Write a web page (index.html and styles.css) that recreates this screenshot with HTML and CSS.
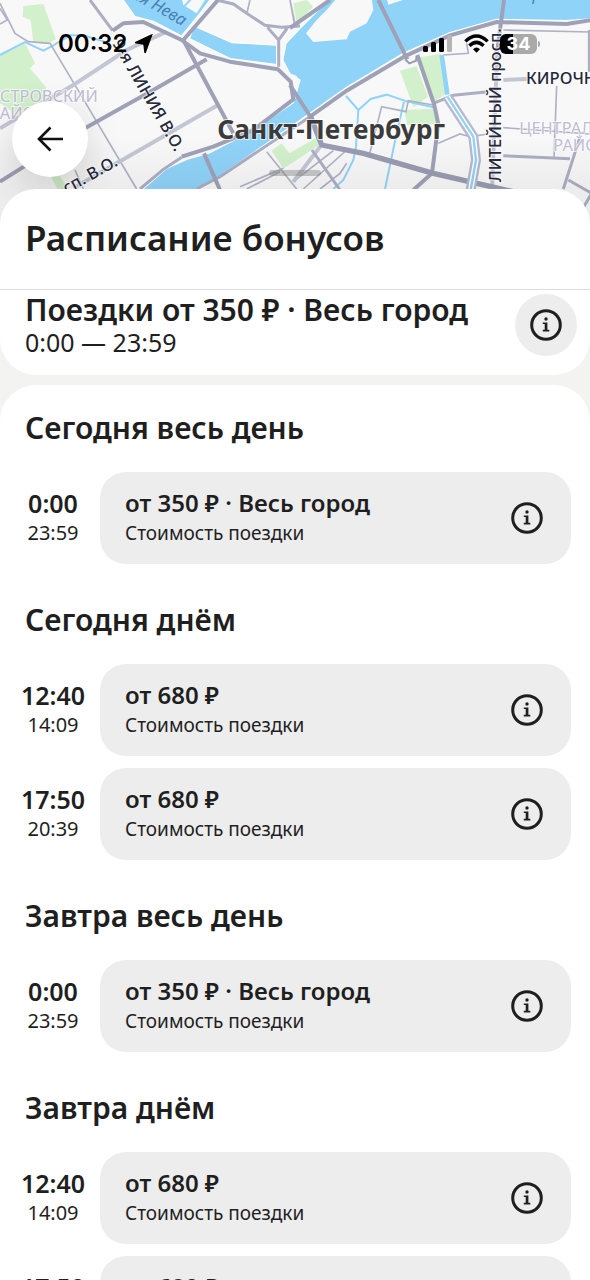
FILE: index.html
```html
<!DOCTYPE html>
<html lang="ru">
<head>
    <meta charset="UTF-8">
    <meta name="viewport" content="width=device-width, initial-scale=1">
    <title>Расписание бонусов</title>
    <link rel="stylesheet" href="styles.css">
</head>
<body>
    <!-- Shared icons -->
    <svg class="icon-defs" aria-hidden="true">
        <symbol id="icon-info" viewBox="0 0 32 32">
            <circle cx="16" cy="16" r="14.3" fill="none" stroke="currentColor" stroke-width="3"/>
            <circle cx="16" cy="10" r="1.7" fill="currentColor"/>
            <path d="M12.8 13.4h4.6v7.4h1.9v1.7h-6.5v-1.7h1.9v-5.7h-1.9z" fill="currentColor"/>
        </symbol>
    </svg>

    <header class="top">
        <svg class="map" viewBox="0 0 1770 678" preserveAspectRatio="xMidYMin slice" aria-hidden="true">
            <defs>
                <linearGradient id="shade" x1="0" y1="0" x2="0" y2="1">
                    <stop offset="0.6" stop-color="#000" stop-opacity="0"/>
                    <stop offset="0.84" stop-color="#000" stop-opacity="0.05"/>
                </linearGradient>
            </defs>
            <rect width="1770" height="678" fill="#f9f8f9"/>

            <!-- parks -->
            <g fill="#d3f0cc">
                <path d="M70 18L130 12L168 118L140 132L100 128L92 60L68 50Z"/>
                <path d="M0 168L75 130L105 190L90 205L138 262V310L60 350L0 310Z"/>
                <path d="M150 525H178L205 567L205 600H190Z"/>
                <path d="M815 452L845 430L868 460L958 408L962 432L850 506Z"/>
                <path d="M1258 172L1322 162L1340 278L1300 308Z"/>
                <path d="M1200 212L1250 198L1284 290L1240 322Z"/>
                <path d="M1212 330L1298 326L1312 372L1222 376Z"/>
                <path d="M880 10L920 0L940 20L890 70Z"/>
            </g>

            <!-- water -->
            <g fill="#90d3f9" stroke="#fff" stroke-width="4">
                <path d="M366 -5L405 50L460 64L545 108L600 40L634 -5Z"/>
                <path d="M582 78L696 128L830 135V194L690 176L568 116Z"/>
                <path d="M848 180L858 130L900 85L990 -5H1775V56L1700 62L1490 58L1350 98L1210 160L1040 262L930 340L650 535L590 575H420L500 505L560 478L630 458L760 390L880 308L900 240L870 222Z"/>
            </g>
            <g fill="#f9f8f9">
                <path d="M918 100L950 60L980 30L1010 -5H1115L1120 30L1100 70L1050 95L1040 118L940 126Z"/>
                <path d="M545 -5H618L590 40L550 15Z"/>
                <path d="M870 220L890 228L898 246L886 270L868 270Z"/>
                <path d="M1160 -5H1225L1165 14Z"/>
            </g>
            <g fill="none" stroke="#90d3f9" stroke-width="6">
                <path d="M0 165L75 126L130 152L160 136L210 106L250 106L330 130"/>
                <path d="M575 -5L550 22"/>
                <path d="M1038 288L1075 330L1112 297L1160 284L1220 304L1300 322"/>
                <path d="M1075 330L1068 440L1060 480L1030 540L1000 567"/>
                <path d="M1212 305L1190 400L1155 567"/>
            </g>

            <!-- small streets -->
            <g fill="none" stroke="#b0b2c4" stroke-width="5">
                <path d="M0 10L45 100L85 125L150 130L222 250L290 365L410 567"/>
                <path d="M0 72L22 60L0 25"/>
                <path d="M225 510L250 567"/>
                <path d="M800 455L890 567M850 505L720 560M840 515L740 567M1040 450L910 567M1000 452L880 545M1040 490L1020 520L960 567"/>
                <path d="M1108 465L1145 320L1218 335L1225 302L1300 315"/>
                <path d="M1315 430L1380 402L1410 410L1465 402"/>
                <path d="M1330 165L1405 160L1400 130M1510 90L1770 96M1670 258L1662 470M1510 383L1770 402"/>
                <path d="M870 0L886 75M740 42L750 0M870 0L884 75"/>
            </g>
            <g fill="none" stroke="#c3c6d3" stroke-width="12">
                <path d="M0 385L220 255L380 150L500 95"/>
                <path d="M220 565L350 490L650 317"/>
                <path d="M1510 240L1582 237"/>
                <path d="M1492 150L1476 567"/>
                <path d="M880 545L960 440"/>
            </g>
            <g fill="none" stroke="#acaec2" stroke-width="9">
                <path d="M936 450L1020 570"/>
                <path d="M1300 310L1360 286L1465 275"/>
                <path d="M1510 467L1710 476M1745 395L1690 567M1705 540L1775 580L1740 640M1768 90V215"/>
                <path d="M650 0L700 12L740 40L795 76L845 82L900 78M836 200V120L802 82M836 120L862 84"/>
                <path d="M270 0L338 92"/>
                <path d="M420 567L490 508L545 472"/>
                <path d="M590 567L660 530L930 350"/>
            </g>

            <!-- main streets and bridges -->
            <g fill="none" stroke="#9fa2b7" stroke-width="12" stroke-linejoin="round">
                <path d="M0 545L260 382L460 270L620 178"/>
                <path d="M338 92L370 70L430 66L545 120L600 160L690 185L834 208L872 245L880 298L760 390L640 440L545 470"/>
                <path d="M654 0L550 120L630 270L700 400"/>
                <path d="M612 460L660 570"/>
                <path d="M870 84L990 0M1135 0L1222 178M870 255L930 348"/>
                <path d="M930 350L1040 272L1212 170L1350 106L1490 66L1700 72L1775 60"/>
                <path d="M1512 0L1492 150"/>
                <path d="M1252 165L1302 312L1315 372L1296 520L1240 570"/>
            </g>
            <path d="M930 345L965 435L1090 460L1300 520L1540 575" fill="none" stroke="#999cb2" stroke-width="16"/>
            <path d="M1215 178L1228 190L1248 182L1250 168" fill="none" stroke="#9a9db3" stroke-width="6"/>

            <!-- canal between two lanes -->
            <g fill="none">
                <path d="M1325 165L1342 284" stroke="#90d3f9" stroke-width="14"/>
                <path d="M1342 290L1420 410L1428 480L1412 570" stroke="#b5bace" stroke-width="30"/>
                <path d="M1342 290L1420 410L1428 480L1412 570" stroke="#fff" stroke-width="16"/>
                <path d="M1342 290L1420 410L1428 480L1412 570" stroke="#90d3f9" stroke-width="7"/>
            </g>

            <rect width="1770" height="678" fill="url(#shade)"/>

            <g class="map-text">
                <text class="map-water" transform="translate(392 -8) rotate(29)">ая Нева</text>
                <text class="map-water" x="1570" y="0">др</text>
                <text class="map-area" x="0" y="305">СТРОВСКИЙ</text>
                <text class="map-area" x="-28" y="356">РАЙО</text>
                <text class="map-area" x="1558" y="402">ЦЕНТРАЛ</text>
                <text class="map-area" x="1660" y="452">РАЙО</text>
                <text class="map-street" transform="translate(336 130) rotate(60)">9-я ЛИНИЯ В.О.</text>
                <text class="map-street" transform="translate(200 582) rotate(-29)">сп. В.О.</text>
                <text class="map-street" transform="translate(1504 546) rotate(-90)">ЛИТЕЙНЫЙ просп.</text>
                <text class="map-street" x="1578" y="252">КИРОЧН</text>
                <text class="map-city" x="652" y="416">Санкт-Петербург</text>
            </g>
        </svg>

        <div class="status-bar">
            <div class="status-left">
                <span class="clock">00:32</span>
                <svg width="20" height="20" viewBox="0 0 20 20"><path d="M18.4 1L12 18.5Q11 20 10.2 18.2L9.4 11.2Q9.2 10.4 8.4 10.4L1.8 9.6Q0 9 1.6 7.8L17 0.6Q19.6-0.6 18.4 1Z"/></svg>
            </div>
            <div class="status-right">
                <svg width="30" height="20" viewBox="0 0 30 20">
                    <rect x="0" y="12" width="5" height="6" rx="1.5"/>
                    <rect x="8" y="8" width="5" height="10" rx="1.5"/>
                    <rect x="16" y="4" width="5" height="14" rx="1.5"/>
                    <rect x="24" y="1" width="5" height="17" rx="1.5" fill="#b4b4b4"/>
                </svg>
                <svg width="25" height="20" viewBox="0 0 25 20" fill="none" stroke="#000" stroke-width="3.4">
                    <path d="M1.4 7.4Q12.5-3.3 23.6 7.4"/>
                    <path d="M5.4 11.8Q12.5 5 19.6 11.8"/>
                    <path d="M12.5 18.8L9 15.2Q12.5 12 16 15.2Z" fill="#000" stroke="none"/>
                </svg>
                <div class="battery"><span>34</span></div>
            </div>
        </div>

        <button class="back" type="button" aria-label="Назад">
            <svg width="28" height="28" viewBox="0 0 28 28" fill="none" stroke="#111" stroke-width="2.6">
                <path d="M14.5 2.5L3 14L14.5 25.5M3 14H27"/>
            </svg>
        </button>
        <div class="grabber"></div>
    </header>

    <main class="sheet">
        <h1 class="sheet-title">Расписание бонусов</h1>

        <section class="trip">
            <div class="trip-text">
                <h2>Поездки от 350 ₽ · Весь город</h2>
                <p>0:00 — 23:59</p>
            </div>
            <button class="info info-round" type="button" aria-label="Подробнее"><svg><use href="#icon-info"/></svg></button>
        </section>

        <div class="schedule">
            <section class="group">
                <h2>Сегодня весь день</h2>
                <div class="slot">
                    <div class="time"><b>0:00</b><span>23:59</span></div>
                    <div class="card">
                        <div class="card-text"><b>от 350 ₽ · Весь город</b><span>Стоимость поездки</span></div>
                        <button class="info" type="button" aria-label="Подробнее"><svg><use href="#icon-info"/></svg></button>
                    </div>
                </div>
            </section>

            <section class="group">
                <h2>Сегодня днём</h2>
                <div class="slot">
                    <div class="time"><b>12:40</b><span>14:09</span></div>
                    <div class="card">
                        <div class="card-text"><b>от 680 ₽</b><span>Стоимость поездки</span></div>
                        <button class="info" type="button" aria-label="Подробнее"><svg><use href="#icon-info"/></svg></button>
                    </div>
                </div>
                <div class="slot">
                    <div class="time"><b>17:50</b><span>20:39</span></div>
                    <div class="card">
                        <div class="card-text"><b>от 680 ₽</b><span>Стоимость поездки</span></div>
                        <button class="info" type="button" aria-label="Подробнее"><svg><use href="#icon-info"/></svg></button>
                    </div>
                </div>
            </section>

            <section class="group">
                <h2>Завтра весь день</h2>
                <div class="slot">
                    <div class="time"><b>0:00</b><span>23:59</span></div>
                    <div class="card">
                        <div class="card-text"><b>от 350 ₽ · Весь город</b><span>Стоимость поездки</span></div>
                        <button class="info" type="button" aria-label="Подробнее"><svg><use href="#icon-info"/></svg></button>
                    </div>
                </div>
            </section>

            <section class="group">
                <h2>Завтра днём</h2>
                <div class="slot">
                    <div class="time"><b>12:40</b><span>14:09</span></div>
                    <div class="card">
                        <div class="card-text"><b>от 680 ₽</b><span>Стоимость поездки</span></div>
                        <button class="info" type="button" aria-label="Подробнее"><svg><use href="#icon-info"/></svg></button>
                    </div>
                </div>
                <div class="slot">
                    <div class="time"><b>17:50</b><span>20:39</span></div>
                    <div class="card">
                        <div class="card-text"><b>от 680 ₽</b><span>Стоимость поездки</span></div>
                        <button class="info" type="button" aria-label="Подробнее"><svg><use href="#icon-info"/></svg></button>
                    </div>
                </div>
            </section>
        </div>
    </main>
</body>
</html>
```

FILE: styles.css
```css
* {
    box-sizing: border-box;
}

body {
    margin: 0;
    height: 100vh;
    overflow: hidden;
    background: #f3f3f2;
    color: #1f1f1f;
    font-family: "Noto Sans", sans-serif;
}

h1, h2, p {
    margin: 0;
    font-weight: 600;
}

button {
    border: none;
    padding: 0;
    color: inherit;
    cursor: pointer;
}

.icon-defs {
    position: absolute;
    width: 0;
    height: 0;
}

/* Map header */
.top {
    position: relative;
    height: 226px;
    padding-top: 30px;
}

.map {
    position: absolute;
    top: 0;
    left: 0;
    width: 100%;
    height: 100%;
}

.map-text {
    paint-order: stroke;
    stroke: #fff;
    stroke-opacity: 0.7;
    stroke-width: 6px;
    stroke-linejoin: round;
}

.map-water {
    font-size: 50px;
    font-style: italic;
    fill: #4a7fb5;
    stroke: none;
}

.map-area {
    font-size: 49px;
    fill: #bfbdd3;
}

.map-street {
    font-size: 50px;
    font-weight: 500;
    fill: #24283a;
}

.map-city {
    font-size: 79px;
    font-weight: 700;
    fill: #3b3b3b;
}

.status-bar {
    position: relative;
    display: flex;
    align-items: center;
    justify-content: space-between;
    height: 28px;
    padding: 0 53px 0 58px;
}

.status-left,
.status-right {
    display: flex;
    align-items: center;
    gap: 6px;
}

.status-right {
    gap: 11px;
}

.clock {
    font: 600 24px/28px Inter, sans-serif;
    color: #000;
}

.battery {
    position: relative;
    width: 37px;
    height: 20px;
    border-radius: 6px;
    background: linear-gradient(90deg, #000 13px, #a9a9a9 13px);
    color: #fff;
    font: 700 18px/20px Inter, sans-serif;
    text-align: center;
}

.battery::after {
    content: "";
    position: absolute;
    right: -3px;
    top: 7px;
    width: 2px;
    height: 6px;
    border-radius: 0 2px 2px 0;
    background: #a9a9a9;
}

.back {
    position: absolute;
    top: 101px;
    left: 12px;
    display: flex;
    align-items: center;
    justify-content: center;
    width: 76px;
    height: 76px;
    border-radius: 50%;
    background: #fff;
    box-shadow: 0 10px 36px rgba(0, 0, 0, 0.15);
}

.grabber {
    position: absolute;
    top: 170px;
    left: calc(50% - 26px);
    width: 52px;
    height: 6px;
    border-radius: 3px;
    background: rgba(120, 120, 120, 0.4);
}

/* Bottom sheet */
.sheet {
    position: relative;
    margin-top: -37px;
}

.sheet-title {
    padding: 25px 25px 27px;
    border-bottom: 1px solid #dcdcdc;
    border-radius: 36px 36px 0 0;
    background: #fff;
    font-size: 35px;
    line-height: 48px;
}

.trip {
    display: flex;
    justify-content: space-between;
    padding: 4px 13px 17px 25px;
    border-radius: 0 0 36px 36px;
    background: #fff;
}

.trip h2 {
    font-size: 30px;
    line-height: 32px;
}

.trip p {
    font-size: 25px;
    line-height: 32px;
    font-weight: 400;
}

.info {
    flex: none;
    width: 32px;
    height: 32px;
    border-radius: 50%;
    background: none;
}

.info svg {
    display: block;
    width: 32px;
    height: 32px;
    margin: auto;
}

.info-round {
    width: 62px;
    height: 62px;
    background: #ededed;
}

.schedule {
    margin-top: 10px;
    padding: 23px 19px 36px 0;
    border-radius: 36px 36px 0 0;
    background: #fff;
}

.group {
    margin-bottom: 36px;
}

.group h2 {
    padding-left: 25px;
    margin-bottom: 24px;
    font-size: 30px;
    line-height: 40px;
}

.slot {
    display: flex;
    align-items: center;
    margin-bottom: 12px;
}

.slot:last-child {
    margin-bottom: 0;
}

.time {
    flex: none;
    width: 100px;
    padding-right: 6px;
    padding-left: 12px;
    text-align: center;
}

.time b,
.time span,
.card-text b,
.card-text span {
    display: block;
    line-height: 30px;
}

.time b {
    font-size: 25px;
    font-weight: 600;
}

.card-text b {
    font-size: 24px;
    font-weight: 600;
}

.time span {
    font-size: 20px;
}

.card-text span {
    font-size: 19px;
}

.card {
    flex: 1;
    display: flex;
    align-items: center;
    justify-content: space-between;
    height: 92px;
    padding: 0 28px 0 25px;
    border-radius: 26px;
    background: #ededed;
}
```
